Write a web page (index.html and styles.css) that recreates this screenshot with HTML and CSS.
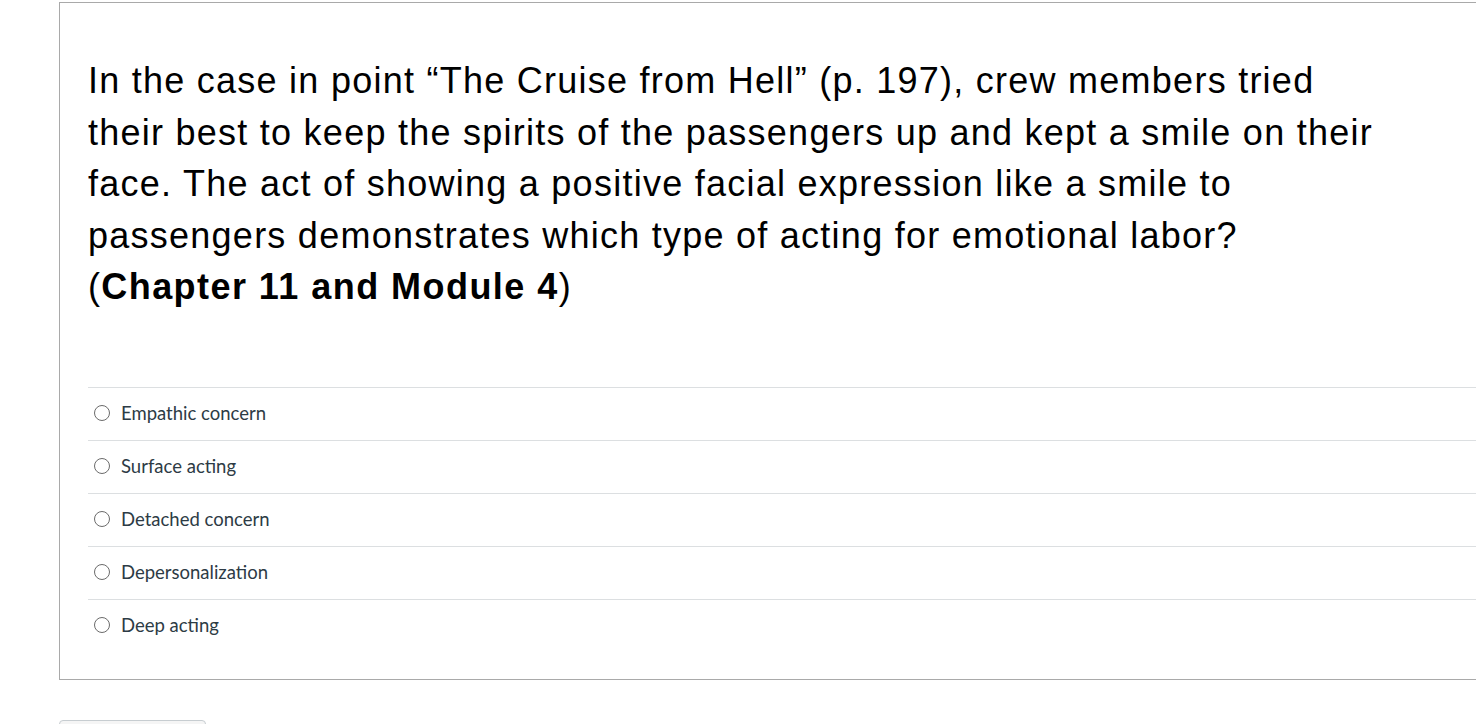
FILE: index.html
```html
<!DOCTYPE html>
<html>
<head>
<meta charset="utf-8">
<link rel="stylesheet" href="styles.css">
</head>
<body>
<div class="page">
  <div class="card">
    <div class="question">
      <p>In the case in point “The Cruise from Hell” (p. 197), crew members tried their best to keep the spirits of the passengers up and kept a smile on their face. The act of showing a positive facial expression like a smile to passengers demonstrates which type of acting for emotional labor? (<strong>Chapter 11 and Module 4</strong>)</p>
    </div>
    <div class="answers">
      <label class="answer"><span class="radio"></span><span class="label">Empathic concern</span></label>
      <label class="answer"><span class="radio"></span><span class="label">Surface acting</span></label>
      <label class="answer"><span class="radio"></span><span class="label">Detached concern</span></label>
      <label class="answer"><span class="radio"></span><span class="label">Depersonalization</span></label>
      <label class="answer"><span class="radio"></span><span class="label">Deep acting</span></label>
    </div>
  </div>
  <div class="actions">
    <div class="button"></div>
  </div>
</div>
</body>
</html>
```
FILE: styles.css
```css
html, body {
  margin: 0;
  padding: 0;
  background: #fff;
  overflow: hidden;
}
.page {
  padding: 2px 0 0 59px;
  width: 1476px;
  box-sizing: border-box;
}
.card {
  border: 1px solid #a9a9a9;
  border-right: none;
  width: calc(100% + 40px);
  box-sizing: border-box;
  padding: 0 0 27px 28px;
}
.question {
  padding-top: 52px;
  padding-bottom: 74px;
}
.question p {
  margin: 0;
  font-family: "Liberation Sans", Arial, sans-serif;
  font-size: 36px;
  letter-spacing: 1.25px;
  line-height: 51.5px;
  color: #000;
  max-width: 1310px;
}
.question strong {
  font-weight: bold;
  letter-spacing: 1.45px;
}
.answers {
  display: flex;
  flex-direction: column;
}
.answer {
  display: flex;
  align-items: center;
  height: 53px;
  box-sizing: border-box;
  border-top: 1px solid #dcdfe1;
  padding-left: 7px;
  padding-bottom: 2px;
  font-family: Lato, "Noto Sans", sans-serif;
  font-size: 18.5px;
  color: #2d3b45;
}
.radio {
  width: 14px;
  height: 14px;
  border: 1px solid #6b6b6b;
  border-radius: 50%;
  margin-right: 11px;
  margin-left: -1px;
  flex: none;
}
.actions {
  padding-top: 40px;
}
.button {
  width: 147px;
  height: 40px;
  border: 1px solid #c7cdd1;
  border-radius: 4px;
  box-sizing: border-box;
  background: #f5f5f5;
}
```
